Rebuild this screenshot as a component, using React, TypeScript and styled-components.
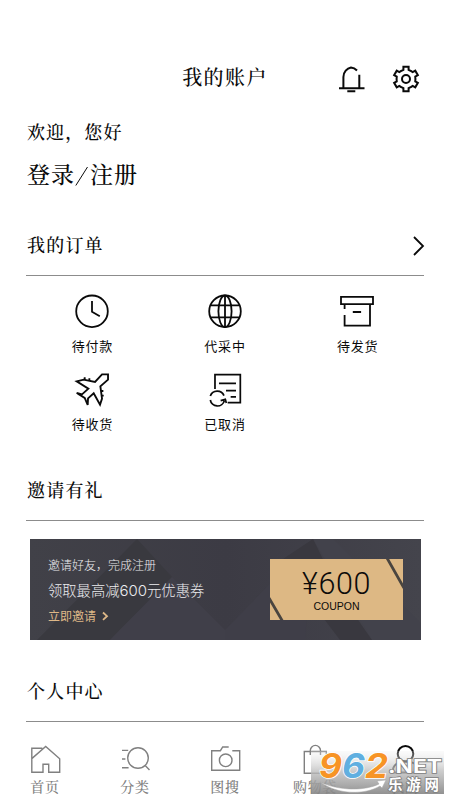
import React from 'react';
import styled, { createGlobalStyle } from 'styled-components';

const GlobalStyle = createGlobalStyle`
  * { box-sizing: border-box; }
  body { margin: 0; background: #fff; }
`;

const serif = `"Noto Serif CJK SC", "Noto Serif SC", "Source Han Serif SC", "Noto Sans CJK SC", serif`;
const sans = `"Noto Sans CJK SC", sans-serif`;

const Screen = styled.div`
  position: relative;
  width: 450px;
  height: 800px;
  background: #fff;
  color: #0a0a0a;
  overflow: hidden;
  display: flex;
  flex-direction: column;
  font-family: ${serif};
  font-weight: 500;
`;

const Header = styled.header`
  display: grid;
  grid-template-columns: 1fr auto 1fr;
  align-items: center;
  height: 30px;
  margin-top: 64px;
  padding: 0 30px;
`;

const Title = styled.h1`
  grid-column: 2;
  margin: 0;
  padding-bottom: 4px;
  font-size: 20px;
  line-height: 26px;
  font-weight: 500;
  letter-spacing: 1.4px;
`;

const Actions = styled.div`
  display: flex;
  justify-content: flex-end;
  gap: 26px;
`;

const Greeting = styled.section`
  padding: 25px 27px 0;
  height: 130px;
`;

const Hello = styled.p`
  margin: 0;
  font-size: 18px;
  line-height: 24px;
  letter-spacing: 1.1px;
`;

const Login = styled.p`
  margin: 14px 0 0;
  font-size: 23px;
  line-height: 34px;
  letter-spacing: 1px;
`;

const Slash = styled.span`
  display: inline-block;
  width: 15px;
  height: 22px;
  vertical-align: -4px;
  svg { display: block; }
`;

const Section = styled.section<{ $height: number }>`
  height: ${(p) => p.$height}px;
  margin: 0 26px;
`;

const SectionHead = styled.div`
  display: flex;
  justify-content: space-between;
  align-items: center;
  height: 52px;
  padding: 0 0 11px 1px;
  border-bottom: 1px solid #8c8c8c;
`;

const SectionTitle = styled.h2`
  margin: 0;
  font-size: 18px;
  line-height: 26px;
  font-weight: 500;
  letter-spacing: 1.2px;
`;

const ChevronIcon = styled.svg`
  margin: 2px -1px 0 0;
`;

const OrderGrid = styled.div`
  display: grid;
  grid-template-columns: repeat(3, 1fr);
  grid-auto-rows: 78px;
  padding-top: 17px;
`;

const OrderItem = styled.div`
  display: flex;
  flex-direction: column;
  align-items: center;
`;

const OrderLabel = styled.span`
  font-family: ${sans};
  font-weight: 400;
  font-size: 13px;
  line-height: 18px;
  letter-spacing: 0.8px;
  margin-top: 8px;
`;

const Banner = styled.div`
  position: relative;
  display: flex;
  justify-content: space-between;
  width: 391px;
  height: 101px;
  margin: 18px 0 0 4px;
  padding: 16px 18px 0;
  background: #3d3c45;
  font-family: ${sans};
  font-weight: 300;
`;

const Facets = styled.svg`
  position: absolute;
  inset: 0;
`;

const BannerText = styled.div`
  position: relative;
  display: flex;
  flex-direction: column;
  color: #ececef;
`;

const BannerSmall = styled.span`
  font-size: 12px;
  line-height: 20px;
`;

const BannerLarge = styled.span`
  font-size: 14.3px;
  line-height: 24px;
  margin-top: 3px;
  white-space: nowrap;
`;

const Digits = styled.span`
  font-family: Inter, sans-serif;
  font-size: 15px;
`;

const Cta = styled.span`
  display: flex;
  align-items: center;
  gap: 6px;
  color: #deb887;
  font-size: 12px;
  font-weight: 400;
  line-height: 20px;
  margin-top: 3px;
`;

const Coupon = styled.div`
  position: relative;
  width: 133px;
  height: 61px;
  margin-top: 4px;
  background: #ddb884;
  color: #0c0b0a;
  display: flex;
  flex-direction: column;
  align-items: center;
  overflow: hidden;
`;

const Amount = styled.span`
  font-family: Roboto, "Liberation Sans", sans-serif;
  font-weight: 300;
  font-size: 30.5px;
  line-height: 32px;
  letter-spacing: 0.6px;
  margin-top: 9px;
`;

const CouponWord = styled.span`
  font-family: "Liberation Sans", Arial, sans-serif;
  font-weight: 400;
  font-size: 10.5px;
  line-height: 12px;
`;

const TabBar = styled.nav`
  display: grid;
  grid-template-columns: repeat(5, 1fr);
  height: 57px;
`;

const Tab = styled.div<{ $active?: boolean }>`
  display: flex;
  flex-direction: column;
  align-items: center;
  color: ${(p) => (p.$active ? '#0a0a0a' : '#808080')};
`;

const TabLabel = styled.span`
  font-size: 14px;
  line-height: 20px;
  letter-spacing: 0.7px;
  margin-top: 1px;
`;

const Watermark = styled.svg`
  position: absolute;
  left: 311px;
  top: 745px;
`;

type IconProps = { size: number; width?: number; children: React.ReactNode };
const Icon = ({ size, width = 1.8, children }: IconProps) => (
  <svg width={size} height={size} viewBox={`0 0 ${size} ${size}`} fill="none" stroke="currentColor" strokeWidth={width}>
    {children}
  </svg>
);

const gearPoints = [0, 60, 120, 180, 240, 300]
  .flatMap((deg) => {
    const a = (deg * Math.PI) / 180;
    return [[-4.6, -8.2], [-2.6, -9.2], [-2.6, -12.2], [2.6, -12.2], [2.6, -9.2], [4.6, -8.2]].map(
      ([x, y]) => `${(14 + x * Math.cos(a) - y * Math.sin(a)).toFixed(2)},${(14 + x * Math.sin(a) + y * Math.cos(a)).toFixed(2)}`,
    );
  })
  .join(' ');

const orders = [
  {
    label: '待付款',
    icon: <><circle cx="18" cy="18.3" r="15.8" /><path d="M18 8v10.8l7.8 4.4" /></>,
  },
  {
    label: '代采中',
    icon: <><circle cx="18" cy="18.3" r="15.8" /><ellipse cx="18" cy="18.3" rx="6.6" ry="15.8" /><path d="M18 2.5v31.6M4 12.3h28M4 24.4h28" /></>,
  },
  {
    label: '待发货',
    icon: <path d="M1 3.8h32v7.3H1zM4.6 11v5M4.6 22v10.700H30V11M12.800 19h8.300" />,
  },
  {
    label: '待收货',
    icon: (
      <g transform="translate(-14.3 -86) scale(.3333)" strokeWidth="5.6">
        <path d="M145 268h-18l-21 23-34-7-21 5 35 22-19 17-16-4 24 15 9 21 1-20 17-15 19 34 6-18-5-37 23-20z" />
        <path d="M75 285v-8M89 288v-8M124 318h7M126 332h6" />
      </g>
    ),
  },
  {
    label: '已取消',
    icon: (
      <g transform="translate(-147 -86) scale(.3333)" strokeWidth="5.2">
        <path d="M465 312v-43h76v84h-38M477 295h51M498 317h30M512 336h16M451 333a22 22 0 0 1 41-1M451 345a21.5 21.5 0 0 0 42 2M482 347l14-4 3 11" />
      </g>
    ),
  },
];

const tabs = [
  { label: '首页', icon: <path d="M2.8 15.6 16.7 3.4l14 12.3v13.6h-11v-8H14v8H2.8v-24h10.6" /> },
  {
    label: '分类',
    icon: <><circle cx="19" cy="15" r="10.3" /><path d="m26.2 22.6 4.3 4.4M3 7.4h6.2M3 16h3.4M3 24.7h6.6" /></>,
  },
  { label: '图搜', icon: <><path d="M19.7 4h-6l-2.3 3.7H2.7v19.6h28V7.7h-7.4" /><circle cx="16.7" cy="17.3" r="6.3" /></> },
  { label: '购物袋', icon: <path d="M5.3 8.5h22v21.8h-22zM11.3 12V7.5a5.100 5.100 0 0 1 10.200 0V12" /> },
  { label: '我的', active: true, icon: <><circle cx="16.5" cy="10.8" r="7.8" /><path d="M3.500 29.500c0-8 6-11 13-11s13.500 3 13.500 11z" /></> },
];

const SiteMark = () => (
  <Watermark width="139" height="55" viewBox="0 0 139 55">
    <defs>
      <linearGradient id="shade" x1="0" y1="0" x2="0" y2="1">
        <stop offset="0" stopColor="#eee" stopOpacity="0.25" />
        <stop offset="0.45" stopColor="#c0c0c0" stopOpacity="0.78" />
        <stop offset="1" stopColor="#858585" stopOpacity="0.9" />
      </linearGradient>
    </defs>
    <rect x="0" y="6" width="133" height="43" fill="url(#shade)" />
    <path d="M9 37C28 46 54 46 68 39l-2-3 9-1-4 8-2-2C54 50 27 50 9 37z" fill="#fff" stroke="#a5a5a5" strokeWidth=".5" />
    <g fontFamily="Inter, sans-serif" fontWeight="700" fontStyle="italic" fontSize="34" stroke="#fff" strokeWidth="1.6" paintOrder="stroke">
      <text x="8" y="33" fill="#f79425" textLength="23" lengthAdjust="spacingAndGlyphs">9</text>
      <text x="31" y="33" fill="#60afe0" textLength="23" lengthAdjust="spacingAndGlyphs">6</text>
      <text x="54" y="33" fill="#f79425" textLength="23" lengthAdjust="spacingAndGlyphs">2</text>
    </g>
    <g fill="#fff" stroke="#808080" strokeWidth="1.6" paintOrder="stroke">
      <text x="77" y="28" fontFamily="Inter, sans-serif" fontWeight="700" fontSize="19" textLength="54" lengthAdjust="spacingAndGlyphs">.NET</text>
      <text x="77" y="45" fontFamily='"Noto Sans CJK SC", sans-serif' fontWeight="700" fontSize="14.5" textLength="51">乐游网</text>
    </g>
  </Watermark>
);

export default function App() {
  return (
    <Screen>
      <GlobalStyle />
      <Header>
        <Title>我的账户</Title>
        <Actions>
          <Icon size={28} width={2}>
            <path d="M1 23.2h25.500M5.400 23V12C5.400 7 9 3.200 13 2.400c2.500.2 4.500 1.500 6 3.100M21.300 9.800V23M9.300 26.200h8" />
          </Icon>
          <Icon size={28} width={2}>
            <polygon points={gearPoints} />
            <circle cx="14" cy="14" r="4" />
          </Icon>
        </Actions>
      </Header>
      <Greeting>
        <Hello>欢迎，您好</Hello>
        <Login>
          登录
          <Slash>
            <svg width="15" height="22" viewBox="0 0 15 22" stroke="currentColor" strokeWidth="1">
              <path d="M.8 20.5 12.5 2" />
            </svg>
          </Slash>
          注册
        </Login>
      </Greeting>
      <Section $height={245}>
        <SectionHead>
          <SectionTitle>我的订单</SectionTitle>
          <ChevronIcon width="13" height="22" viewBox="0 0 13 22" fill="none" stroke="currentColor" strokeWidth="1.8">
            <path d="m2 3 9 9-9 9" />
          </ChevronIcon>
        </SectionHead>
        <OrderGrid>
          {orders.map((o) => (
            <OrderItem key={o.label}>
              <Icon size={36}>{o.icon}</Icon>
              <OrderLabel>{o.label}</OrderLabel>
            </OrderItem>
          ))}
        </OrderGrid>
      </Section>
      <Section $height={201}>
        <SectionHead>
          <SectionTitle>邀请有礼</SectionTitle>
        </SectionHead>
        <Banner>
          <Facets width="391" height="101" viewBox="0 0 391 101">
            <defs>
              <linearGradient id="sheen" x1="0" y1="0" x2="1" y2="0">
                <stop offset="0" stopColor="#414148" />
                <stop offset="0.5" stopColor="#3c3b44" />
                <stop offset="1" stopColor="#44444c" />
              </linearGradient>
            </defs>
            <rect width="391" height="101" fill="url(#sheen)" />
            <path d="M107 0 142 38 80 101H7z" fill="#39393f" />
            <path d="M142 38 195 91v10H80z" fill="#403f49" />
            <path d="M283 0 195 91v10h80z" fill="#3f3e48" />
            <path d="M283 0h20l88 84v17h-49z" fill="#42424b" />
            <path d="M283 0 250 22l60 79h32l-32-46z" fill="#39383f" />
          </Facets>
          <BannerText>
            <BannerSmall>邀请好友，完成注册</BannerSmall>
            <BannerLarge>领取最高减<Digits>600</Digits>元优惠券</BannerLarge>
            <Cta>
              立即邀请
              <svg width="7" height="10" viewBox="0 0 7 10" fill="none" stroke="currentColor" strokeWidth="1.8">
                <path d="m1 1.500 4 3.700-4 3.700" />
              </svg>
            </Cta>
          </BannerText>
          <Coupon>
            <Facets width="133" height="61" viewBox="0 0 133 61" stroke="#4a453f" strokeWidth="2.8">
              <path d="m117 -1 17 30M-1 39l14 24" />
            </Facets>
            <Amount>¥600</Amount>
            <CouponWord>COUPON</CouponWord>
          </Coupon>
        </Banner>
      </Section>
      <Section $height={73}>
        <SectionHead>
          <SectionTitle>个人中心</SectionTitle>
        </SectionHead>
      </Section>
      <TabBar>
        {tabs.map((t) => (
          <Tab key={t.label} $active={t.active}>
            <Icon size={32} width={t.active ? 2 : 1.4}>{t.icon}</Icon>
            <TabLabel>{t.label}</TabLabel>
          </Tab>
        ))}
      </TabBar>
      <SiteMark />
    </Screen>
  );
}
